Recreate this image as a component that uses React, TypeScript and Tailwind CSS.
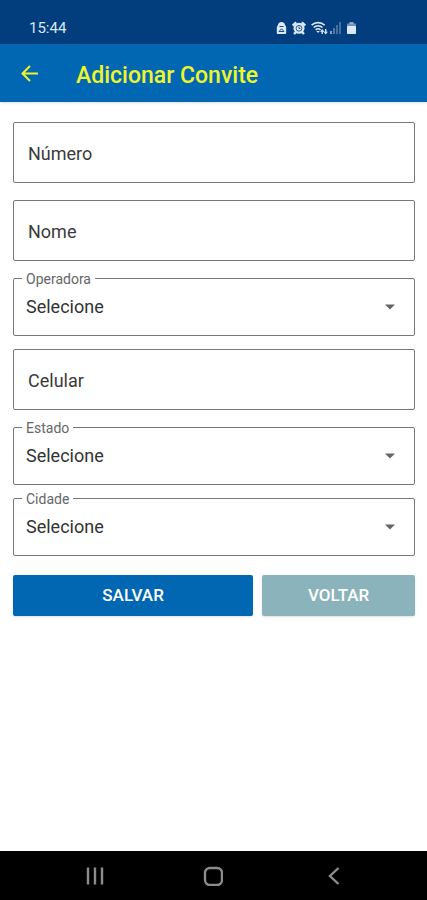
import { useState } from 'react'

const operadoras = ['Vivo', 'Claro', 'TIM', 'Oi']
const estados = ['Minas Gerais', 'Rio de Janeiro', 'São Paulo']
const cidades = ['Belo Horizonte', 'Niterói', 'Campinas']

function StatusBar() {
  return (
    <div className="flex h-11 items-center justify-between bg-[#023d7d] pt-3 pr-[71px] pl-[29px] text-[#dbe8f6]">
      <span className="text-[15px]">15:44</span>
      <div className="flex items-center gap-[5px]" aria-hidden="true">
        <svg width="11" height="14" viewBox="0 0 11 14">
          <path d="M5.5 1C3.4 1 2 2.4 1.8 4.2L.8 6v6.2c0 .5.3.8.8.8h7.8c.5 0 .8-.3.8-.8V6l-1-1.8C9 2.400 7.600 1 5.500 1Z" fill="currentColor" />
          <path d="M3.500 5.500h4M3 10.500l2.500-2.700L8 10.500Z" fill="none" stroke="#023d7d" strokeWidth="0.900" />
        </svg>
        <svg width="14" height="14" viewBox="0 0 14 14">
          <path d="M.8 4.500 4.300 1.300M13.200 4.500 9.700 1.300M2 13l2.500-2.500M12 13l-2.500-2.500" stroke="currentColor" strokeWidth="2.400" />
          <circle cx="7" cy="7.300" r="5.500" fill="currentColor" />
          <circle cx="7" cy="7.300" r="2.900" fill="none" stroke="#023d7d" strokeWidth="0.800" />
          <path d="M7 5.500v2h1.500" fill="none" stroke="#023d7d" strokeWidth="0.800" />
        </svg>
        <svg width="31" height="14" viewBox="0 0 31 14">
          <path
            d="M.6 4.200c3.700-3.500 9.300-3.500 13 0M2.700 6.500c2.600-2.300 6.200-2.300 8.800 0M4.700 8.800c1.400-1.200 3.400-1.200 4.800 0"
            fill="none"
            stroke="currentColor"
            strokeWidth="1.600"
          />
          <path d="M5.300 10h3.600L7.100 12ZM9 10.800l2.200-2.800 2.200 2.800ZM12.500 10.800h4.400l-2.200 2.800Z" fill="currentColor" />
          <path d="M11.200 10v3M14.700 8v3" stroke="currentColor" strokeWidth="1.400" />
          <g fill="currentColor">
            <rect x="19" y="10" width="2" height="3" opacity="0.600" />
            <rect x="22" y="7" width="2" height="6" opacity="0.350" />
            <rect x="25" y="4" width="2" height="9" opacity="0.300" />
            <rect x="28" y="1" width="2" height="12" opacity="0.300" />
          </g>
        </svg>
        <svg width="9" height="14" viewBox="0 0 9 14">
          <rect x="2.500" y="1" width="4" height="2" fill="currentColor" opacity="0.600" />
          <rect x="0" y="2.500" width="9" height="3" rx="0.500" fill="currentColor" opacity="0.500" />
          <rect x="0" y="5" width="9" height="8" rx="0.800" fill="currentColor" />
        </svg>
      </div>
    </div>
  )
}

function TextField({ name, label, type = 'text' }: { name: string; label: string; type?: string }) {
  return (
    <input
      name={name}
      type={type}
      aria-label={label}
      placeholder={label}
      className="mb-[17px] h-[61px] w-full rounded-[2px] border border-[#777] bg-white px-[14px] pt-[2px] text-lg text-[#222] placeholder:text-[#3a3a3a] placeholder:opacity-100"
    />
  )
}

function SelectField({ id, label, options }: { id: string; label: string; options: string[] }) {
  const [value, setValue] = useState('')

  return (
    <div className="relative mb-[13px]">
      <label
        htmlFor={id}
        className="absolute -top-[7px] left-[9px] bg-white px-1 text-sm leading-4 text-[#666]"
      >
        {label}
      </label>
      <select
        id={id}
        value={value}
        onChange={e => setValue(e.target.value)}
        className="block h-[58px] w-full appearance-none rounded-[2px] border border-[#777] bg-white px-3 text-lg text-[#333]"
      >
        <option value="">Selecione</option>
        {options.map(option => (
          <option key={option}>{option}</option>
        ))}
      </select>
      <svg
        className="pointer-events-none absolute top-[26px] right-5"
        width="10"
        height="6"
        viewBox="0 0 10 6"
        aria-hidden="true"
      >
        <path d="M0 .500h10L5 5.500Z" fill="#666" />
      </svg>
    </div>
  )
}

function NavigationBar() {
  return (
    <nav className="grid h-[49px] grid-cols-3 bg-black px-[34px] pt-px text-[#8c8c8c]">
      <button type="button" aria-label="Recentes" className="flex items-center justify-center">
        <svg width="20" height="20" viewBox="0 0 20 20">
          <path d="M4 1.500v17M11 1.500v17M18 1.500v17" stroke="currentColor" strokeWidth="2.400" />
        </svg>
      </button>
      <button type="button" aria-label="Início" className="flex items-center justify-center">
        <svg width="20" height="20" viewBox="0 0 20 20">
          <rect x="2" y="2" width="17" height="17" rx="5" fill="none" stroke="currentColor" strokeWidth="2.400" />
        </svg>
      </button>
      <button type="button" aria-label="Voltar" className="flex items-center justify-center">
        <svg width="20" height="20" viewBox="0 0 20 20">
          <path d="M15.500 2 7 10l8.500 8" fill="none" stroke="currentColor" strokeWidth="2.400" />
        </svg>
      </button>
    </nav>
  )
}

export default function App() {
  return (
    <div className="flex min-h-screen flex-col bg-white font-[Roboto,sans-serif]">
      <StatusBar />
      <header className="flex h-[58px] items-center bg-[#0267b2] px-5 pt-[2px] text-[#eef52c] shadow-sm">
        <button type="button" aria-label="Voltar" className="mr-9">
          <svg className="block" width="20" height="20" viewBox="0 0 20 20">
            <path d="M18 9.500H3M10 2 2.500 9.500 10 17" fill="none" stroke="currentColor" strokeWidth="2" />
          </svg>
        </button>
        <h1 className="pt-1 text-[23px] font-medium">Adicionar Convite</h1>
      </header>

      <main className="flex-1 pt-5 pr-3 pl-[13px]">
        <form onSubmit={e => e.preventDefault()}>
          <TextField name="numero" label="Número" />
          <TextField name="nome" label="Nome" />
          <SelectField id="operadora" label="Operadora" options={operadoras} />
          <TextField name="celular" label="Celular" type="tel" />
          <SelectField id="estado" label="Estado" options={estados} />
          <SelectField id="cidade" label="Cidade" options={cidades} />

          <div className="grid grid-cols-[11fr_7fr] gap-[9px] pt-[6px] text-[17px] font-medium text-white">
            <button type="submit" className="h-[41px] rounded-[2px] bg-[#0267b2] pt-px shadow-sm">
              SALVAR
            </button>
            <button type="button" className="h-[41px] rounded-[2px] bg-[#8bb3bb] pt-px shadow-sm">
              VOLTAR
            </button>
          </div>
        </form>
      </main>

      <NavigationBar />
    </div>
  )
}
